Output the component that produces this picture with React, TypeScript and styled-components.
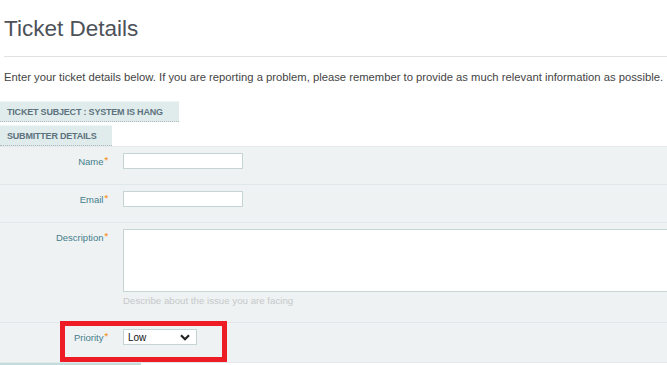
import React from 'react'
import styled, { createGlobalStyle } from 'styled-components'

const GlobalStyle = createGlobalStyle`
  html, body {
    margin: 0;
    padding: 0;
    background: #ffffff;
    font-family: "Liberation Sans", Arial, sans-serif;
  }
`

const Page = styled.div`
  width: 667px;
  height: 365px;
  overflow: hidden;
`

const Header = styled.div`
  padding: 0 0 0 4px;
`

const Title = styled.h1`
  margin: 16px 0 0;
  font-size: 22.5px;
  line-height: 26px;
  font-weight: normal;
  color: #4d5259;
`

const Rule = styled.hr`
  margin: 14px 0 0;
  border: 0;
  border-top: 1px solid #e2e2e2;
`

const Intro = styled.p`
  margin: 13px 0 0;
  font-size: 11.25px;
  line-height: 14px;
  color: #444;
  white-space: nowrap;
`

const Tabs = styled.div`
  margin-top: 17px;
  display: flex;
  flex-direction: column;
  align-items: flex-start;
  gap: 3px;
`

const Tab = styled.div<{ $width: number }>`
  width: ${(p) => p.$width}px;
  box-sizing: border-box;
  height: 21px;
  padding: 0 0 0 7px;
  display: flex;
  align-items: center;
  background: #e0ecec;
  border-top: 1px solid #eef5f5;
  border-bottom: 1px dotted #aeb8bb;
  font-size: 9px;
  font-weight: bold;
  letter-spacing: -0.2px;
  color: #5d727d;
  text-transform: uppercase;
  white-space: nowrap;
`

const Panel = styled.div`
  background: #eef2f3;
  border-top: 1px solid #e3eaeb;
`

const Row = styled.div<{ $height: number }>`
  position: relative;
  display: grid;
  grid-template-columns: 108px 1fr;
  column-gap: 15px;
  height: ${(p) => p.$height}px;
  box-sizing: border-box;
  padding-top: 6px;
  border-bottom: 1px solid #e1e8e9;
`

const Label = styled.label`
  text-align: right;
  font-size: 9.5px;
  line-height: 12px;
  padding-top: 3px;
  color: #457e8c;
  white-space: nowrap;
`

const Star = styled.sup`
  color: #f59a3a;
  font-size: 9px;
  font-weight: bold;
  vertical-align: top;
  position: relative;
  top: -2px;
  margin-left: 1px;
`

const TextInput = styled.input`
  width: 120px;
  height: 16px;
  box-sizing: border-box;
  margin: 0;
  border: 1px solid #c6d4d4;
  background: #fff;
  padding: 0 3px;
  font: inherit;
`

const Field = styled.div`
  display: flex;
  flex-direction: column;
  min-width: 0;
`

const TextArea = styled.textarea`
  width: 560px;
  height: 63px;
  box-sizing: border-box;
  margin: 0;
  border: 1px solid #c6d4d4;
  background: #fff;
  resize: none;
  display: block;
`

const Hint = styled.span`
  margin-top: 3px;
  font-size: 9.7px;
  line-height: 12px;
  color: #c6c9ca;
  white-space: nowrap;
`

const Select = styled.div`
  width: 74px;
  height: 16px;
  box-sizing: border-box;
  border: 1px solid #c6d4d4;
  background: #fff;
  display: flex;
  align-items: center;
  justify-content: space-between;
  padding: 0 6px 0 4px;
  font-size: 10px;
  color: #111;
`

const Highlight = styled.div`
  position: absolute;
  left: 60px;
  top: -2px;
  width: 167px;
  height: 41px;
  box-sizing: border-box;
  border: 5px solid #ee1c25;
  pointer-events: none;
`

const NextTab = styled.div`
  width: 141px;
  height: 6px;
  border-top: 2px solid #c4dcdc;
  background: #f4f8f8;
`

const Chevron = () => (
  <svg width="10" height="7" viewBox="0 0 10 7">
    <path d="M1 1.2 L5 5.2 L9 1.2" fill="none" stroke="#222" strokeWidth="2.2" />
  </svg>
)

export default function App() {
  return (
    <Page>
      <GlobalStyle />
      <Header>
        <Title>Ticket Details</Title>
        <Rule />
        <Intro>
          Enter your ticket details below. If you are reporting a problem, please remember to
          provide as much relevant information as possible.
        </Intro>
      </Header>
      <Tabs>
        <Tab $width={179}>Ticket Subject : System is hang</Tab>
        <Tab $width={112}>Submitter Details</Tab>
      </Tabs>
      <Panel>
        <Row $height={38}>
          <Label>
            Name<Star>*</Star>
          </Label>
          <TextInput type="text" />
        </Row>
        <Row $height={38}>
          <Label>
            Email<Star>*</Star>
          </Label>
          <TextInput type="text" />
        </Row>
        <Row $height={100}>
          <Label>
            Description<Star>*</Star>
          </Label>
          <Field>
            <TextArea />
            <Hint>Describe about the issue you are facing</Hint>
          </Field>
        </Row>
        <Row $height={40}>
          <Label>
            Priority<Star>*</Star>
          </Label>
          <Select>
            <span>Low</span>
            <Chevron />
          </Select>
          <Highlight />
        </Row>
      </Panel>
      <NextTab />
    </Page>
  )
}
